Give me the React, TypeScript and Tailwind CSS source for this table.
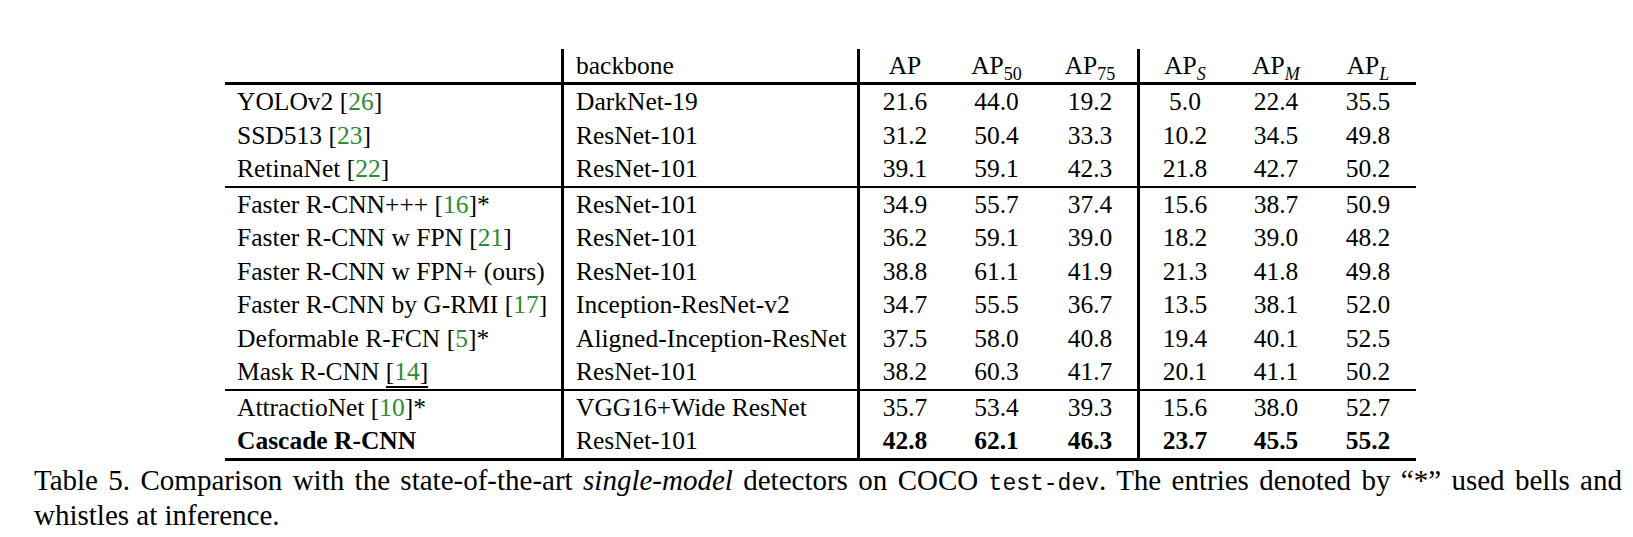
import React from 'react';

type Row = {
  name: string;
  cite?: string;
  star?: boolean;
  backbone: string;
  values: string[];
  bold?: boolean;
};

const groups: Row[][] = [
  [
    { name: 'YOLOv2', cite: '26', backbone: 'DarkNet-19', values: ['21.6', '44.0', '19.2', '5.0', '22.4', '35.5'] },
    { name: 'SSD513', cite: '23', backbone: 'ResNet-101', values: ['31.2', '50.4', '33.3', '10.2', '34.5', '49.8'] },
    { name: 'RetinaNet', cite: '22', backbone: 'ResNet-101', values: ['39.1', '59.1', '42.3', '21.8', '42.7', '50.2'] },
  ],
  [
    { name: 'Faster R-CNN+++', cite: '16', star: true, backbone: 'ResNet-101', values: ['34.9', '55.7', '37.4', '15.6', '38.7', '50.9'] },
    { name: 'Faster R-CNN w FPN', cite: '21', backbone: 'ResNet-101', values: ['36.2', '59.1', '39.0', '18.2', '39.0', '48.2'] },
    { name: 'Faster R-CNN w FPN+ (ours)', backbone: 'ResNet-101', values: ['38.8', '61.1', '41.9', '21.3', '41.8', '49.8'] },
    { name: 'Faster R-CNN by G-RMI', cite: '17', backbone: 'Inception-ResNet-v2', values: ['34.7', '55.5', '36.7', '13.5', '38.1', '52.0'] },
    { name: 'Deformable R-FCN', cite: '5', star: true, backbone: 'Aligned-Inception-ResNet', values: ['37.5', '58.0', '40.8', '19.4', '40.1', '52.5'] },
    { name: 'Mask R-CNN', cite: '14', backbone: 'ResNet-101', values: ['38.2', '60.3', '41.7', '20.1', '41.1', '50.2'] },
  ],
  [
    { name: 'AttractioNet', cite: '10', star: true, backbone: 'VGG16+Wide ResNet', values: ['35.7', '53.4', '39.3', '15.6', '38.0', '52.7'] },
    { name: 'Cascade R-CNN', backbone: 'ResNet-101', values: ['42.8', '62.1', '46.3', '23.7', '45.5', '55.2'], bold: true },
  ],
];

const numCell = ['w-[93px] border-l-[3px] border-black', 'w-[93px]', 'w-[94px]', 'w-[93px] border-l-[3px] border-black', 'w-[92px]', 'w-[92px]'];

const Sub: React.FC<{ children: React.ReactNode; italic?: boolean }> = ({ children, italic }) => (
  <span className={`relative top-[6px] text-[18px] ${italic ? 'italic' : ''}`}>{children}</span>
);

const headers: React.ReactNode[] = [
  <>AP</>,
  <>AP<Sub>50</Sub></>,
  <>AP<Sub>75</Sub></>,
  <>AP<Sub italic>S</Sub></>,
  <>AP<Sub italic>M</Sub></>,
  <>AP<Sub italic>L</Sub></>,
];

const TableRow: React.FC<{ row: Row }> = ({ row }) => (
  <div className="flex h-[33.5px] items-center leading-[33.5px]">
    <div className={`w-[336px] h-full pl-3 whitespace-nowrap ${row.bold ? 'font-bold' : ''}`}>
      {row.name}
      {row.cite && (
        <>
          {' '}
          <span className={row.name === 'Mask R-CNN' ? 'border-b-2 border-black' : ''}>
            [<span className="text-[#2e8b2e]">{row.cite}</span>]
          </span>
        </>
      )}
      {row.star && '*'}
    </div>
    <div className="w-[296px] h-full border-l-[3px] border-black pl-3 whitespace-nowrap">{row.backbone}</div>
    {row.values.map((v, i) => (
      <div key={i} className={`${numCell[i]} h-full text-center ${row.bold ? 'font-bold' : ''}`}>{v}</div>
    ))}
  </div>
);

export default function App() {
  return (
    <div className="min-h-screen bg-white text-black font-['Liberation_Serif','Times_New_Roman',serif] text-[25.5px] pt-[49px]">
      <div className="ml-[225px] w-[1191px]">
        <div className="flex h-[33px] items-center leading-[33px]">
          <div className="w-[336px] h-full" />
          <div className="w-[296px] h-full border-l-[3px] border-black pl-3">backbone</div>
          {headers.map((h, i) => (
            <div key={i} className={`${numCell[i]} h-full text-center whitespace-nowrap`}>{h}</div>
          ))}
        </div>
        <div className="h-[3px] bg-black" />
        {groups.map((g, gi) => (
          <div key={gi}>
            {g.map((r, ri) => (
              <TableRow key={ri} row={r} />
            ))}
            <div className={gi === groups.length - 1 ? 'h-[3px] bg-black' : 'h-[2px] bg-black'} />
          </div>
        ))}
      </div>
      <p className="ml-[34px] mt-[4px] w-[1588px] text-justify text-[29px] leading-[31px]">
        Table 5. Comparison with the state-of-the-art <i>single-model</i> detectors on COCO{' '}
        <span className="font-['Liberation_Mono','Courier_New',monospace] text-[23px]">test-dev</span>. The entries denoted by “*” used bells and whistles at inference.
      </p>
    </div>
  );
}
